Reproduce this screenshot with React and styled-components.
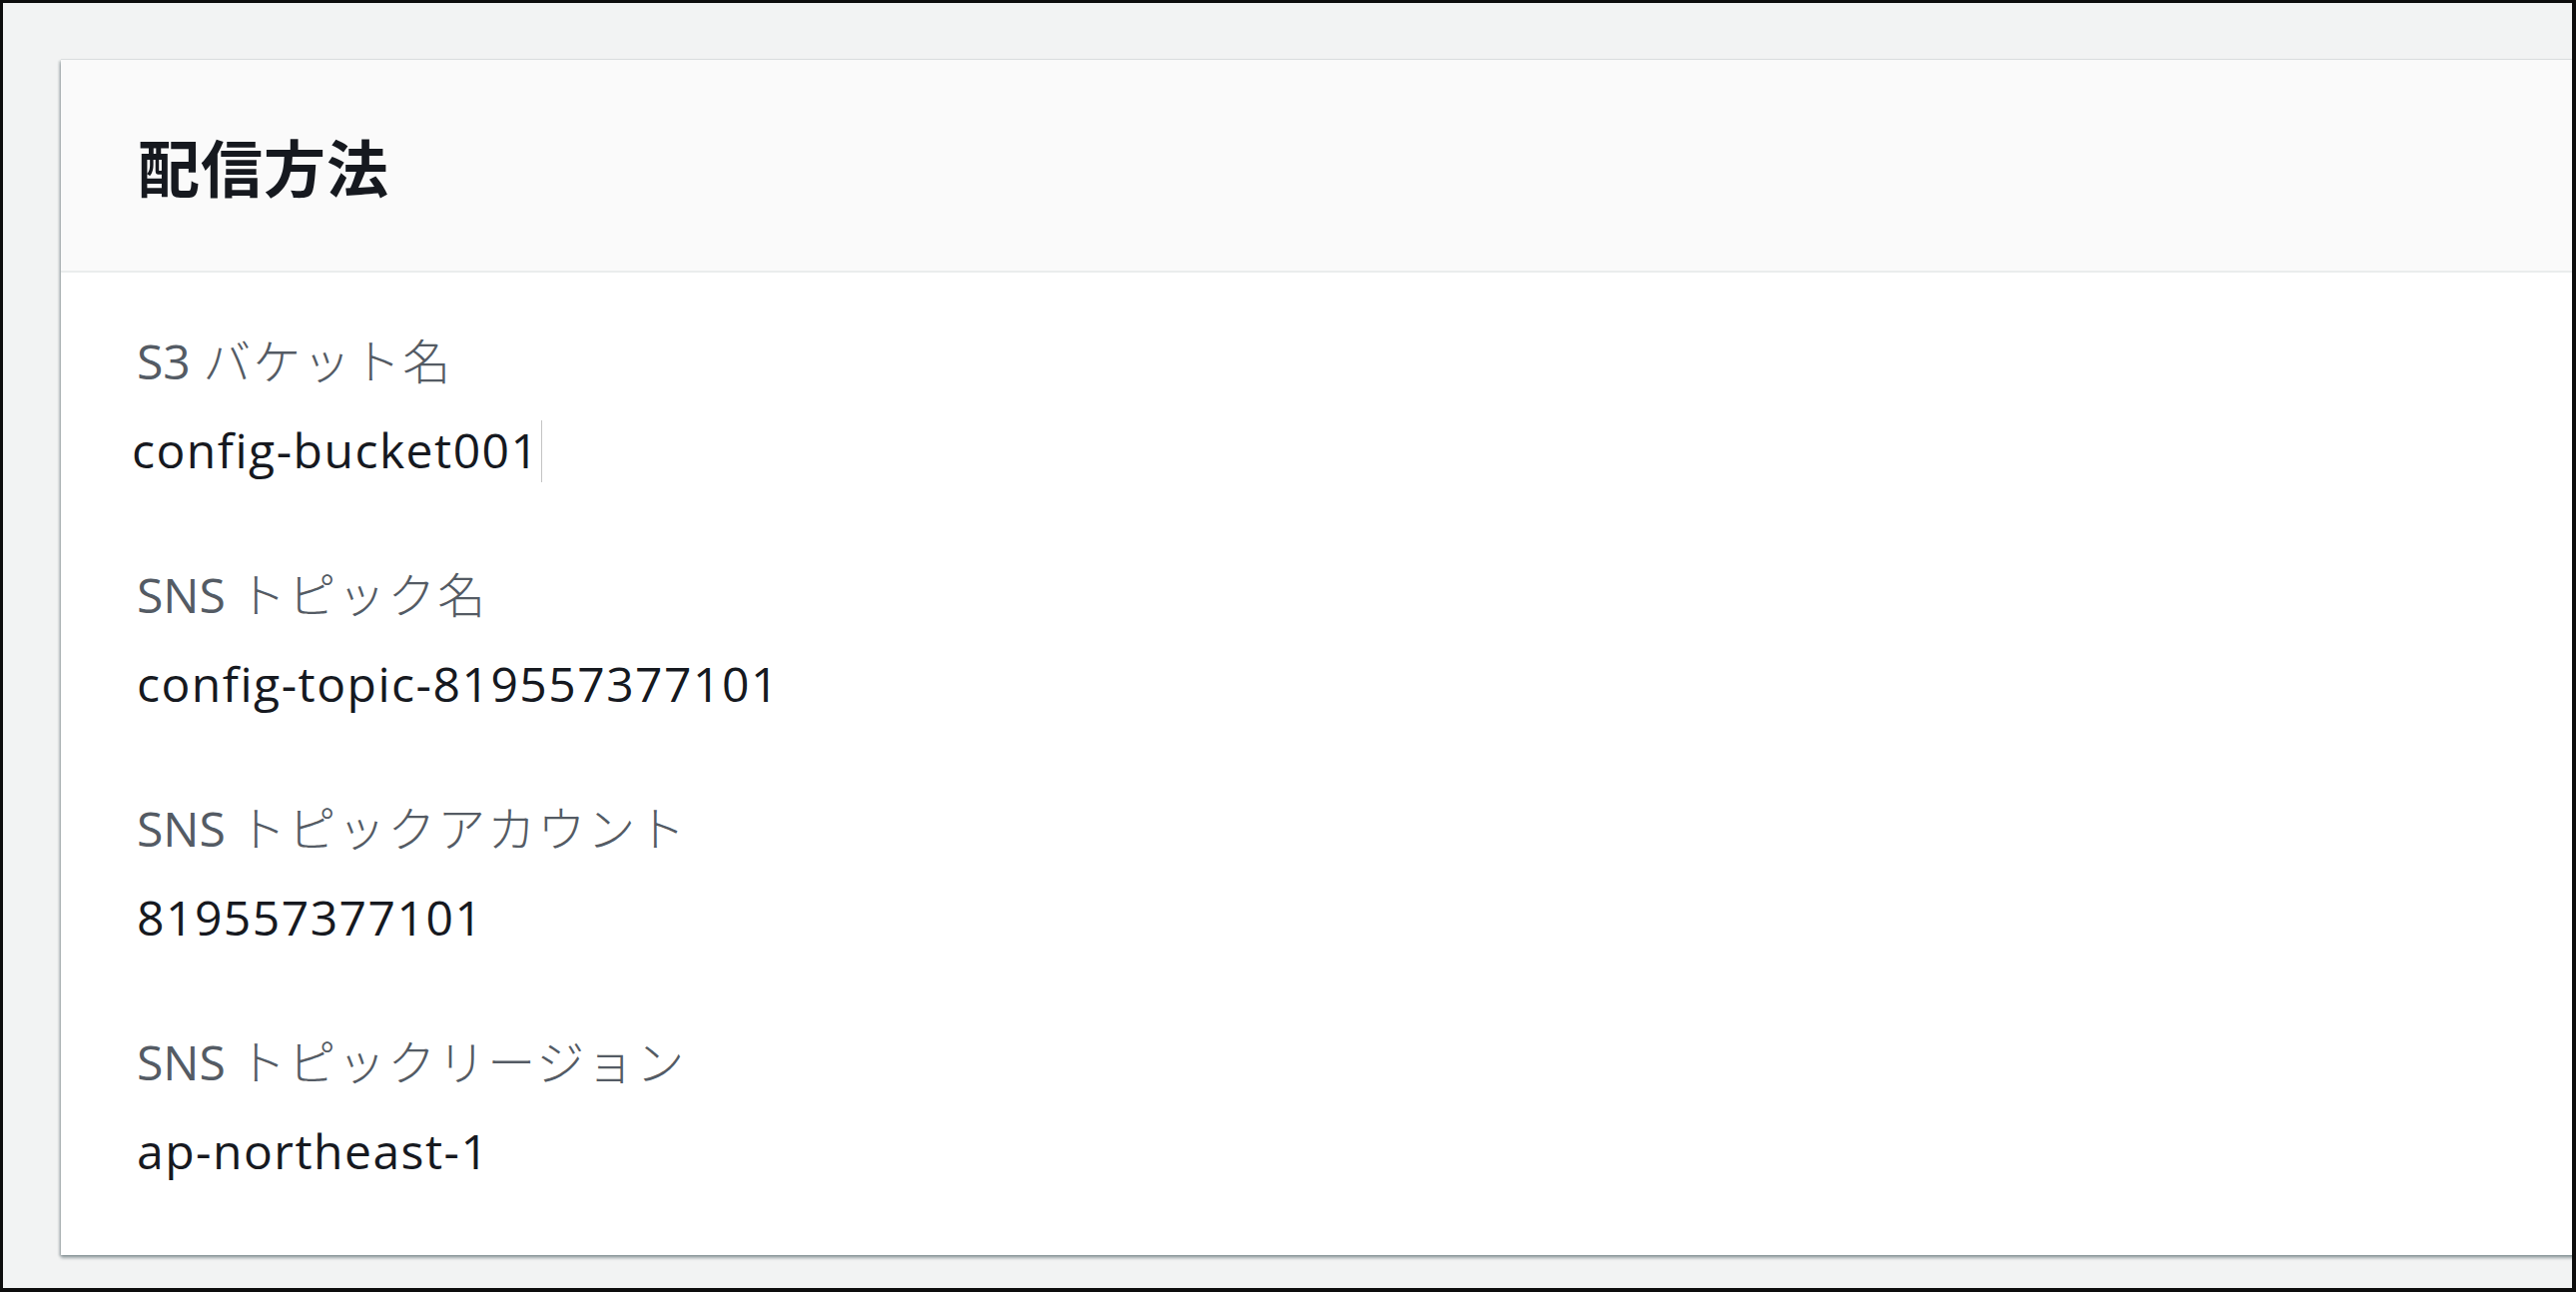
import React from "react";
import styled, { createGlobalStyle } from "styled-components";

const GlobalStyle = createGlobalStyle`
  html, body {
    margin: 0;
    padding: 0;
    background: #ffffff;
  }
  * { box-sizing: border-box; }
`;

const Frame = styled.div`
  width: 2580px;
  height: 1294px;
  border-style: solid;
  border-color: #0d0d0d;
  border-width: 3px 4px 4px 3px;
  background: #f2f3f3;
  padding: 57px 0 0 58px;
  overflow: hidden;
  font-family: "Open Sans", "Noto Sans CJK JP", sans-serif;
`;

const Card = styled.section`
  width: 2600px;
  background: #ffffff;
  box-shadow: 0 3px 3px 0 rgba(0, 28, 36, 0.35), -2px 1px 2px 0 rgba(0, 28, 36, 0.18),
    0 -1px 1px 0 rgba(0, 28, 36, 0.08);
`;

const CardHeader = styled.header`
  height: 213px;
  display: flex;
  align-items: center;
  padding-left: 77px;
  background: #fafafa;
  border-bottom: 2px solid #eaeded;
`;

const Title = styled.h2`
  margin: 0;
  font-family: "Noto Sans CJK JP", "Open Sans", sans-serif;
  font-size: 62px;
  font-weight: 700;
  line-height: 1;
  color: #16191f;
  letter-spacing: 1px;
`;

const CardBody = styled.div`
  display: flex;
  flex-direction: column;
  gap: 68px;
  padding: 49px 0 67px 76px;
`;

const Field = styled.div`
  display: flex;
  flex-direction: column;
  gap: 14px;
`;

const Label = styled.div`
  font-size: 48px;
  line-height: 75px;
  font-weight: 400;
  color: #545b64;
  white-space: nowrap;
`;

const LabelJa = styled.span`
  font-family: "Noto Sans CJK JP", sans-serif;
  font-weight: 300;
  letter-spacing: 2px;
`;

const Value = styled.div`
  font-size: 48px;
  line-height: 75px;
  color: #16191f;
  letter-spacing: 1.5px;
  white-space: nowrap;
  margin-left: ${(p) => (p.$editing ? "-5px" : "0")};
`;

const Caret = styled.span`
  display: inline-block;
  width: 1px;
  height: 62px;
  margin-left: 1px;
  vertical-align: -14px;
  background: #c4c4c4;
`;

const fields = [
  { label: "S3", ja: "バケット名", value: "config-bucket001", editing: true },
  { label: "SNS", ja: "トピック名", value: "config-topic-819557377101" },
  { label: "SNS", ja: "トピックアカウント", value: "819557377101" },
  { label: "SNS", ja: "トピックリージョン", value: "ap-northeast-1" },
];

export default function App() {
  return (
    <>
      <GlobalStyle />
      <Frame>
        <Card>
          <CardHeader>
            <Title>配信方法</Title>
          </CardHeader>
          <CardBody>
            {fields.map((f, i) => (
              <Field key={i}>
                <Label>
                  {f.label} <LabelJa>{f.ja}</LabelJa>
                </Label>
                <Value $editing={f.editing}>
                  {f.value}
                  {f.editing && <Caret />}
                </Value>
              </Field>
            ))}
          </CardBody>
        </Card>
      </Frame>
    </>
  );
}
